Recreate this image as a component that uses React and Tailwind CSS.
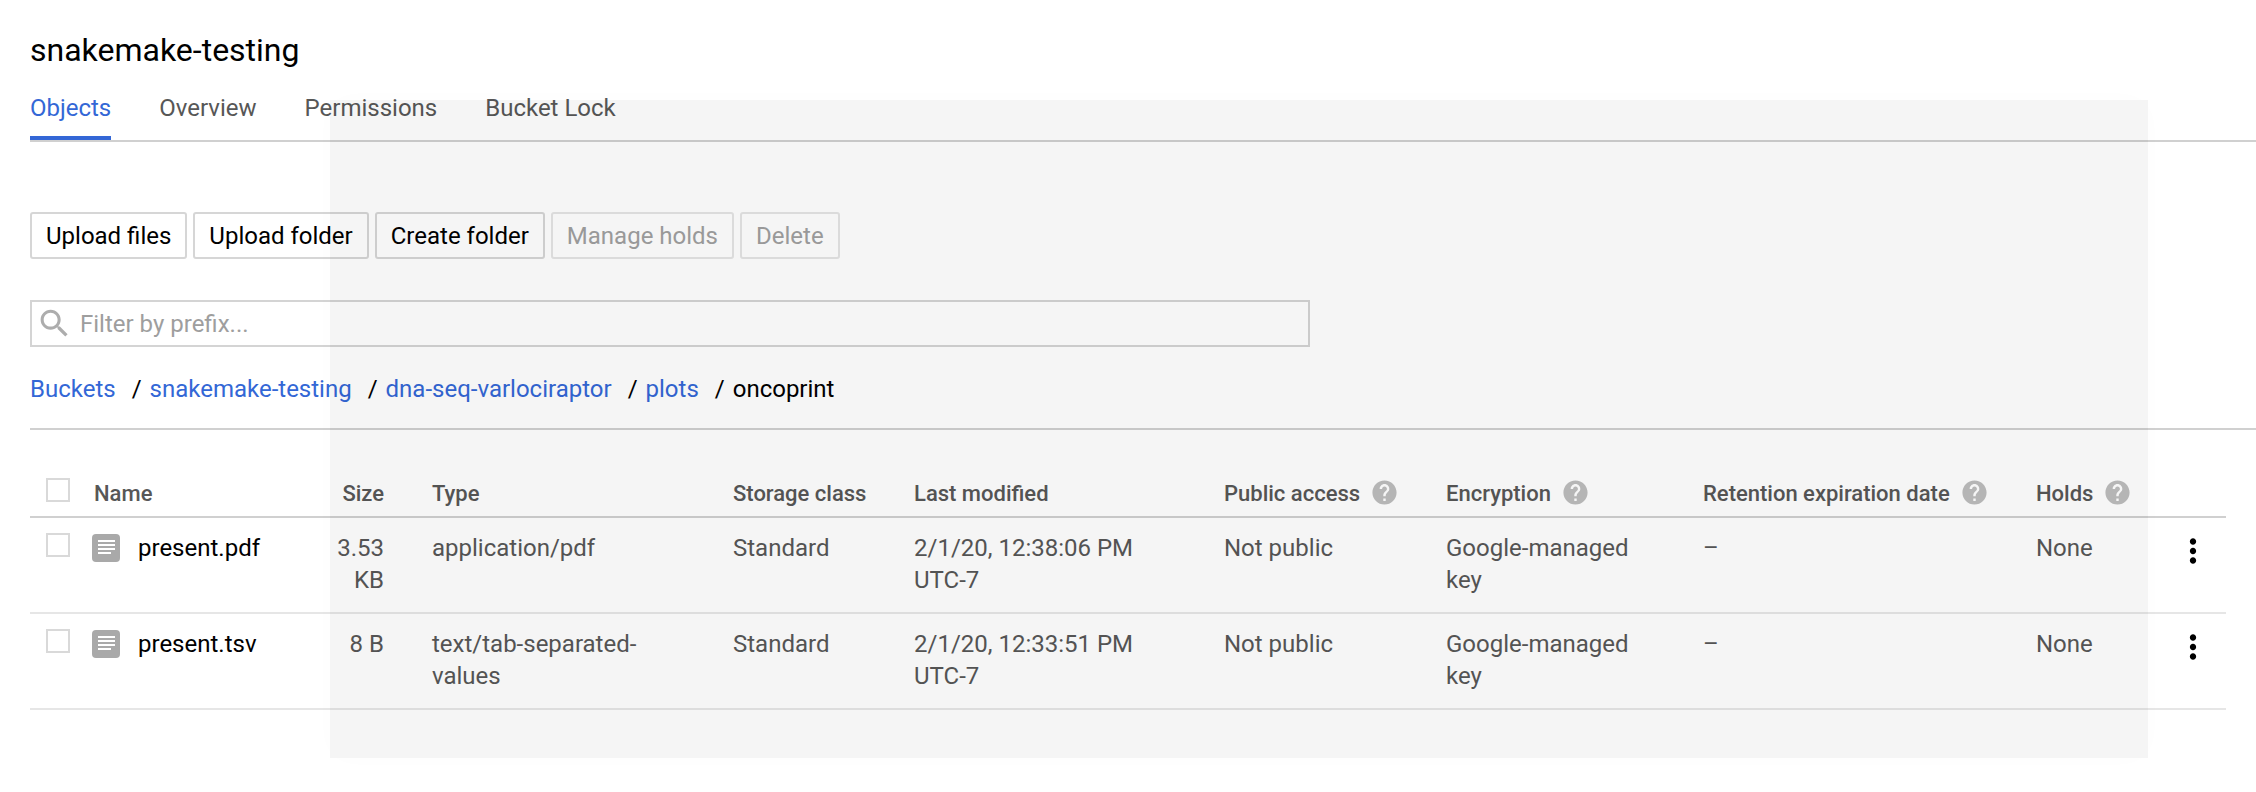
import React from 'react';

const COLS = 'grid grid-cols-[64px_236px_54px_48px_301px_181px_310px_222px_257px_333px_124px_66px]';

function HelpIcon() {
  return (
    <svg viewBox="0 0 24 24" className="w-[29px] h-[29px] shrink-0 fill-[#bdbdbd]">
      <path d="M12 2C6.48 2 2 6.48 2 12s4.48 10 10 10 10-4.48 10-10S17.52 2 12 2zm1 17h-2v-2h2v2zm2.07-7.75l-.9.92C13.45 12.9 13 13.5 13 15h-2v-.5c0-1.1.45-2.1 1.17-2.83l1.24-1.26c.37-.36.59-.86.59-1.41 0-1.1-.9-2-2-2s-2 .9-2 2H8c0-2.21 1.79-4 4-4s4 1.79 4 4c0 .88-.36 1.68-.93 2.25z" />
    </svg>
  );
}

function FileIcon() {
  return (
    <div className="w-[28px] h-[28px] rounded-[4px] bg-[#a9a9a9] flex flex-col gap-[2px] pt-[6px] pl-[6px] shrink-0">
      <div className="w-[17px] h-[2px] bg-white" />
      <div className="w-[17px] h-[2px] bg-white" />
      <div className="w-[17px] h-[2px] bg-white" />
      <div className="w-[13px] h-[2px] bg-white" />
    </div>
  );
}

function Checkbox() {
  return <div className="ml-[16px] w-[24px] h-[24px] border-2 border-[#d9d9d9] bg-white" />;
}

function Button({ children, disabled }) {
  return (
    <button
      className={`h-[47px] px-[14px] pt-[1px] rounded-[3px] border-2 bg-white text-[24px] ${
        disabled ? 'border-[#e4e4e4] text-[#a0a0a0]' : 'border-[#d6d6d6] text-black'
      }`}
    >
      {children}
    </button>
  );
}

function HeadCell({ children, help }) {
  return (
    <div className="flex items-start gap-[10px] font-medium text-[22px] leading-[32px] text-[#575757]">
      <span>{children}</span>
      {help && <HelpIcon />}
    </div>
  );
}

function Row({ name, size, type, modified }) {
  return (
    <div className={`${COLS} h-[96px] pt-[14px] border-b-2 border-[#e6e6e6] text-[24px] leading-[32px] text-[#575757]`}>
      <div className="pt-[1px]">
        <Checkbox />
      </div>
      <div className="flex items-start gap-[18px] text-black -ml-[2px]">
        <div className="pt-[2px]">
          <FileIcon />
        </div>
        <span>{name}</span>
      </div>
      <div className="text-right">{size}</div>
      <div />
      <div className="max-w-[240px]">{type}</div>
      <div>Standard</div>
      <div className="max-w-[240px]">{modified}</div>
      <div>Not public</div>
      <div className="max-w-[200px]">Google-managed key</div>
      <div>–</div>
      <div>None</div>
      <div className="flex justify-center">
        <svg viewBox="0 0 24 24" className="w-[38px] h-[38px] fill-black">
          <path d="M12 8c1.1 0 2-.9 2-2s-.9-2-2-2-2 .9-2 2 .9 2 2 2zm0 2c-1.1 0-2 .9-2 2s.9 2 2 2 2-.9 2-2-.9-2-2-2zm0 6c-1.1 0-2 .9-2 2s.9 2 2 2 2-.9 2-2-.9-2-2-2z" />
        </svg>
      </div>
    </div>
  );
}

export default function App() {
  const crumbs = ['Buckets', 'snakemake-testing', 'dna-seq-varlociraptor', 'plots'];
  return (
    <div className="relative h-[792px] overflow-hidden bg-white pl-[30px] font-['Roboto',sans-serif]">
      <h1 className="pt-[30px] h-[76px] text-[32px] leading-[40px] font-normal text-black">snakemake-testing</h1>

      <div className="flex gap-[48px] border-b-2 border-[#d0d0d0] h-[66px] text-[24px] text-[#575757]">
        <div className="h-[64px] flex items-center border-b-4 border-[#3367d6] pt-[4px] text-[#3367d6]">Objects</div>
        <div className="h-[64px] flex items-center">Overview</div>
        <div className="h-[64px] flex items-center">Permissions</div>
        <div className="h-[64px] flex items-center">Bucket Lock</div>
      </div>

      <div className="flex gap-[6px] mt-[70px]">
        <Button>Upload files</Button>
        <Button>Upload folder</Button>
        <Button>Create folder</Button>
        <Button disabled>Manage holds</Button>
        <Button disabled>Delete</Button>
      </div>

      <div className="mt-[41px] w-[1280px] h-[47px] border-2 border-[#d4d4d4] flex items-center pl-[4px] gap-[7px] text-[24px] text-[#9e9e9e]">
        <svg viewBox="0 0 24 24" className="w-[37px] h-[37px] fill-[#adadad]">
          <path d="M15.5 14h-.79l-.28-.27C15.41 12.59 16 11.11 16 9.5 16 5.91 13.09 3 9.5 3S3 5.91 3 9.5 5.91 16 9.5 16c1.61 0 3.09-.59 4.23-1.57l.27.28v.79l5 4.99L20.49 19l-4.99-5zm-6 0C7.01 14 5 11.99 5 9.5S7.01 5 9.5 5 14 7.01 14 9.5 11.99 14 9.5 14z" />
        </svg>
        <span>Filter by prefix...</span>
      </div>

      <div className="mt-[26px] h-[32px] flex items-center text-[24px] leading-[32px]">
        {crumbs.map((c) => (
          <React.Fragment key={c}>
            <span className="text-[#3367d6]">{c}</span>
            <span className="text-black ml-[16px] mr-[8px]">/</span>
          </React.Fragment>
        ))}
        <span className="text-black">oncoprint</span>
      </div>

      <div className="mt-[23px] border-b-2 border-[#d0d0d0]" />

      <div className="w-[2196px]">
        <div className={`${COLS} pt-[48px] h-[88px] border-b-2 border-[#d0d0d0]`}>
          <Checkbox />
          <HeadCell>Name</HeadCell>
          <div className="flex justify-end">
            <HeadCell>Size</HeadCell>
          </div>
          <div />
          <HeadCell>Type</HeadCell>
          <HeadCell>Storage class</HeadCell>
          <HeadCell>Last modified</HeadCell>
          <HeadCell help>Public access</HeadCell>
          <HeadCell help>Encryption</HeadCell>
          <HeadCell help>Retention expiration date</HeadCell>
          <HeadCell help>Holds</HeadCell>
          <div />
        </div>
        <Row name="present.pdf" size="3.53 KB" type="application/pdf" modified="2/1/20, 12:38:06 PM UTC-7" />
        <Row name="present.tsv" size="8 B" type="text/tab-separated-values" modified="2/1/20, 12:33:51 PM UTC-7" />
      </div>

      <div className="absolute left-[330px] top-[100px] w-[1818px] h-[658px] bg-black/[0.04] pointer-events-none shadow-[0_0_30px_rgba(0,0,0,0.012)]" />
    </div>
  );
}
